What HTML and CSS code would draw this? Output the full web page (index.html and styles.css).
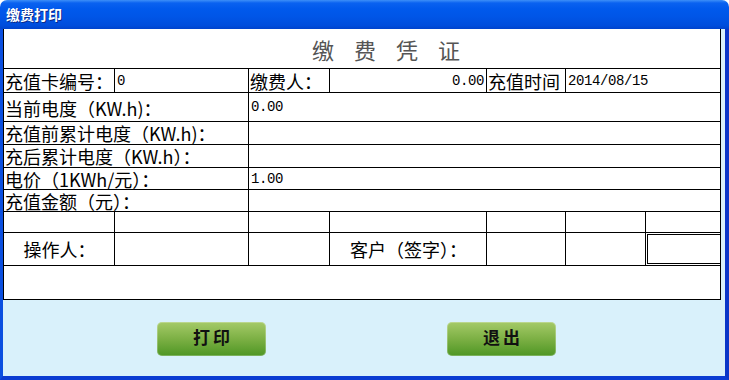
FILE: index.html
```html
<!DOCTYPE html>
<html lang="zh-CN">

<head>
    <meta charset="UTF-8">
    <meta name="viewport" content="width=device-width, initial-scale=1.0">
    <title>缴费打印</title>
    <link rel="stylesheet" href="styles.css">
</head>

<body>

    <div class="window">
        <div class="titlebar">缴费打印</div>

        <div class="client">
            <div class="sheet">
                <div class="heading">缴费凭证</div>

                <div class="grid">
                    <!-- row 1 -->
                    <div class="cell label">充值卡编号：</div>
                    <div class="cell num">0</div>
                    <div class="cell label">缴费人：</div>
                    <div class="cell num right">0.00</div>
                    <div class="cell label">充值时间</div>
                    <div class="cell num span2">2014/08/15</div>

                    <!-- rows 2 - 6 -->
                    <div class="cell label span2 low">当前电度（KW.h)：</div>
                    <div class="cell num span5">0.00</div>

                    <div class="cell label span2">充值前累计电度（KW.h)：</div>
                    <div class="cell span5"></div>

                    <div class="cell label span2">充后累计电度（KW.h）：</div>
                    <div class="cell span5"></div>

                    <div class="cell label span2">电价（1KWh/元）：</div>
                    <div class="cell num span5">1.00</div>

                    <div class="cell label span2">充值金额（元）：</div>
                    <div class="cell span5"></div>

                    <!-- row 7 -->
                    <div class="cell"></div>
                    <div class="cell"></div>
                    <div class="cell"></div>
                    <div class="cell"></div>
                    <div class="cell"></div>
                    <div class="cell"></div>
                    <div class="cell"></div>

                    <!-- row 8 -->
                    <div class="cell label center">操作人：</div>
                    <div class="cell"></div>
                    <div class="cell"></div>
                    <div class="cell label center">客户（签字）：</div>
                    <div class="cell"></div>
                    <div class="cell"></div>
                    <div class="cell"><div class="sign-box"></div></div>

                    <!-- row 9 -->
                    <div class="cell span7"></div>
                </div>
            </div>

            <div class="actions">
                <button class="btn">打印</button>
                <button class="btn">退出</button>
            </div>
        </div>
    </div>

</body>

</html>
```

FILE: styles.css
```css
body {
    margin: 0;
    background: #fff;
    font-family: "Noto Sans CJK SC", "DejaVu Sans", sans-serif;
}

.window {
    width: 729px;
    height: 380px;
    display: flex;
    flex-direction: column;
    border-radius: 7px 7px 0 0;
    overflow: hidden;
}

.titlebar {
    height: 29px;
    line-height: 28px;
    padding-left: 6px;
    color: #fff;
    font-size: 14px;
    font-weight: bold;
    text-shadow: 1px 1px 0 #0a2a8a;
    background: linear-gradient(#3d8ff8 0, #0a62f0 3px, #0059ec 9px, #0056e8 55%, #004ddc 88%, #0043cc 100%);
}

.client {
    flex: 1;
    background: #d9f1fb;
    border-left: 3px solid #0b4fe0;
    border-right: 4px solid #0a36c8;
    border-bottom: 4px solid #0a3cd2;
}

.sheet {
    width: 716px;
    background: #fff;
    border: 1px solid #000;
    border-top: none;
}

.heading {
    height: 39px;
    box-sizing: border-box;
    padding: 7px 0 0 308px;
    font-size: 22px;
    line-height: 26px;
    letter-spacing: 20px;
    color: #555;
}

.grid {
    display: grid;
    grid-template-columns: 110px 133px 80px 156px 78px 79px 74px;
    grid-template-rows: 23px 28px 22px 22px 21px 21px 20px 32px 33px;
    gap: 1px;
    background: #000;
    border-top: 1px solid #000;
}

.cell {
    background: #fff;
    display: flex;
    align-items: center;
    white-space: nowrap;
    line-height: 18px;
}

.label {
    font-size: 18px;
    padding-left: 1px;
    color: #000;
}

.low {
    align-items: flex-end;
    padding-bottom: 4px;
}

.center {
    justify-content: center;
}

.num {
    font-family: "Liberation Mono", monospace;
    font-size: 14px;
    letter-spacing: -0.4px;
    padding-left: 2px;
    color: #000;
}

.right {
    justify-content: flex-end;
    padding-right: 2px;
}

.span2 {
    grid-column: span 2;
}

.span5 {
    grid-column: span 5;
}

.span7 {
    grid-column: span 7;
}

.sign-box {
    align-self: stretch;
    flex: 1;
    margin: 1px 0 1px 1px;
    border: 1px solid #000;
    border-right: none;
}

.actions {
    display: flex;
    gap: 181px;
    padding: 22px 0 0 154px;
}

.btn {
    width: 109px;
    height: 34px;
    padding: 0 0 5px 3px;
    border: none;
    border-radius: 5px;
    background: linear-gradient(#a5ca68, #7cb044 50%, #4e9624);
    box-shadow: inset 0 0 0 1px rgba(255, 255, 255, 0.25);
    font-family: "Noto Sans CJK SC", sans-serif;
    font-size: 17px;
    font-weight: bold;
    letter-spacing: 3px;
    color: #111;
    cursor: pointer;
}
```
